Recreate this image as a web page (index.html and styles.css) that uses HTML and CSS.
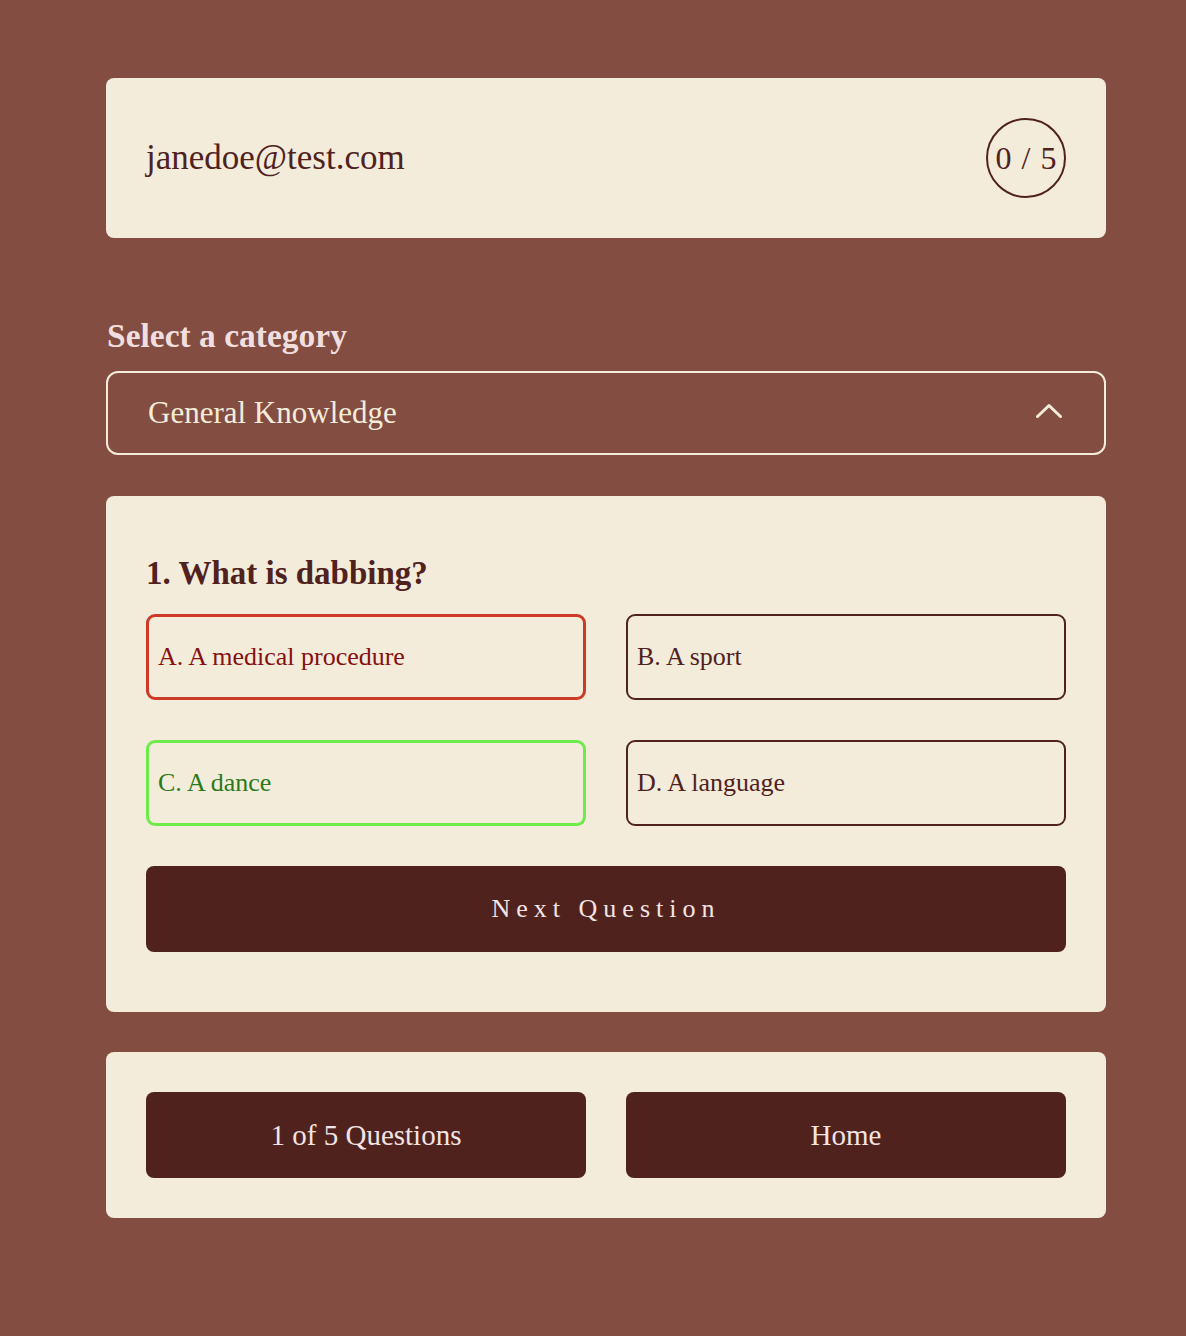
FILE: index.html
```html
<!DOCTYPE html>
<html lang="en">
<head>
<meta charset="utf-8">
<title>Quiz</title>
<link rel="stylesheet" href="styles.css">
</head>
<body>
<main class="page">
  <header class="card header">
    <span class="email">janedoe@test.com</span>
    <span class="score">0 / 5</span>
  </header>

  <section class="category">
    <label class="category-label">Select a category</label>
    <div class="select">
      <span class="select-value">General Knowledge</span>
      <svg class="chevron" width="26" height="16" viewBox="0 0 26 16" aria-hidden="true">
        <polyline points="1.5,13.5 13,2.5 24.5,13.5" fill="none" stroke="#f3ecd9" stroke-width="3" stroke-linecap="round" stroke-linejoin="round"/>
      </svg>
    </div>
  </section>

  <section class="card quiz">
    <h2 class="question">1. What is dabbing?</h2>
    <div class="options">
      <div class="option wrong">A. A medical procedure</div>
      <div class="option">B. A sport</div>
      <div class="option correct">C. A dance</div>
      <div class="option">D. A language</div>
    </div>
    <button class="btn next">Next Question</button>
  </section>

  <footer class="card footer">
    <button class="btn small">1 of 5 Questions</button>
    <button class="btn small">Home</button>
  </footer>
</main>
</body>
</html>
```

FILE: styles.css
```css
* { box-sizing: border-box; }

html, body {
  margin: 0;
  padding: 0;
}

body {
  background: #834d42;
  font-family: "Liberation Serif", "Times New Roman", serif;
  color: #50221e;
  min-height: 1336px;
}

.page {
  width: 1000px;
  margin-left: 106px;
  padding-top: 78px;
}

.card {
  background: #f3ecdb;
  border-radius: 8px;
}

.header {
  height: 160px;
  display: flex;
  align-items: center;
  justify-content: space-between;
  padding: 0 40px;
}

.email {
  font-size: 35px;
  line-height: 40px;
}

.score {
  width: 80px;
  height: 80px;
  border: 2px solid #50221e;
  border-radius: 50%;
  display: flex;
  align-items: center;
  justify-content: center;
  font-size: 32px;
  word-spacing: 2px;
}

.category {
  margin-top: 78px;
}

.category-label {
  display: block;
  font-size: 33.5px;
  line-height: 40px;
  font-weight: 700;
  color: #f1dfdf;
  margin-bottom: 15px;
  margin-left: 1px;
}

.select {
  height: 84px;
  border: 2px solid #f3ecd9;
  border-radius: 12px;
  display: flex;
  align-items: center;
  justify-content: space-between;
  padding: 0 42px 0 40px;
}

.select-value {
  font-size: 31px;
  color: #f3ecd9;
}

.chevron {
  display: block;
  margin-top: -4px;
}

.quiz {
  margin-top: 41px;
  padding: 57px 40px 60px;
}

.question {
  margin: 0 0 21px;
  font-size: 33px;
  line-height: 40px;
  font-weight: 700;
  color: #50221e;
}

.options {
  display: grid;
  grid-template-columns: 1fr 1fr;
  gap: 40px;
}

.option {
  height: 86px;
  border: 2px solid #50221e;
  border-radius: 9px;
  display: flex;
  align-items: center;
  padding-left: 9px;
  font-size: 26px;
  color: #50221e;
}

.option.wrong {
  border: 3px solid #cd3a27;
  color: #871010;
}

.option.correct {
  border: 3px solid #6ceb4a;
  color: #2b7a19;
}

.btn {
  display: flex;
  align-items: center;
  justify-content: center;
  height: 86px;
  width: 100%;
  border: none;
  border-radius: 8px;
  background: #50221e;
  color: #f3e4e4;
  font-family: "Liberation Serif", "Times New Roman", serif;
}

.next {
  margin-top: 40px;
  font-size: 26px;
  letter-spacing: 6px;
  padding-left: 6px;
}

.footer {
  margin-top: 40px;
  padding: 40px;
  display: grid;
  grid-template-columns: 1fr 1fr;
  gap: 40px;
}

.small {
  font-size: 29px;
}
```
